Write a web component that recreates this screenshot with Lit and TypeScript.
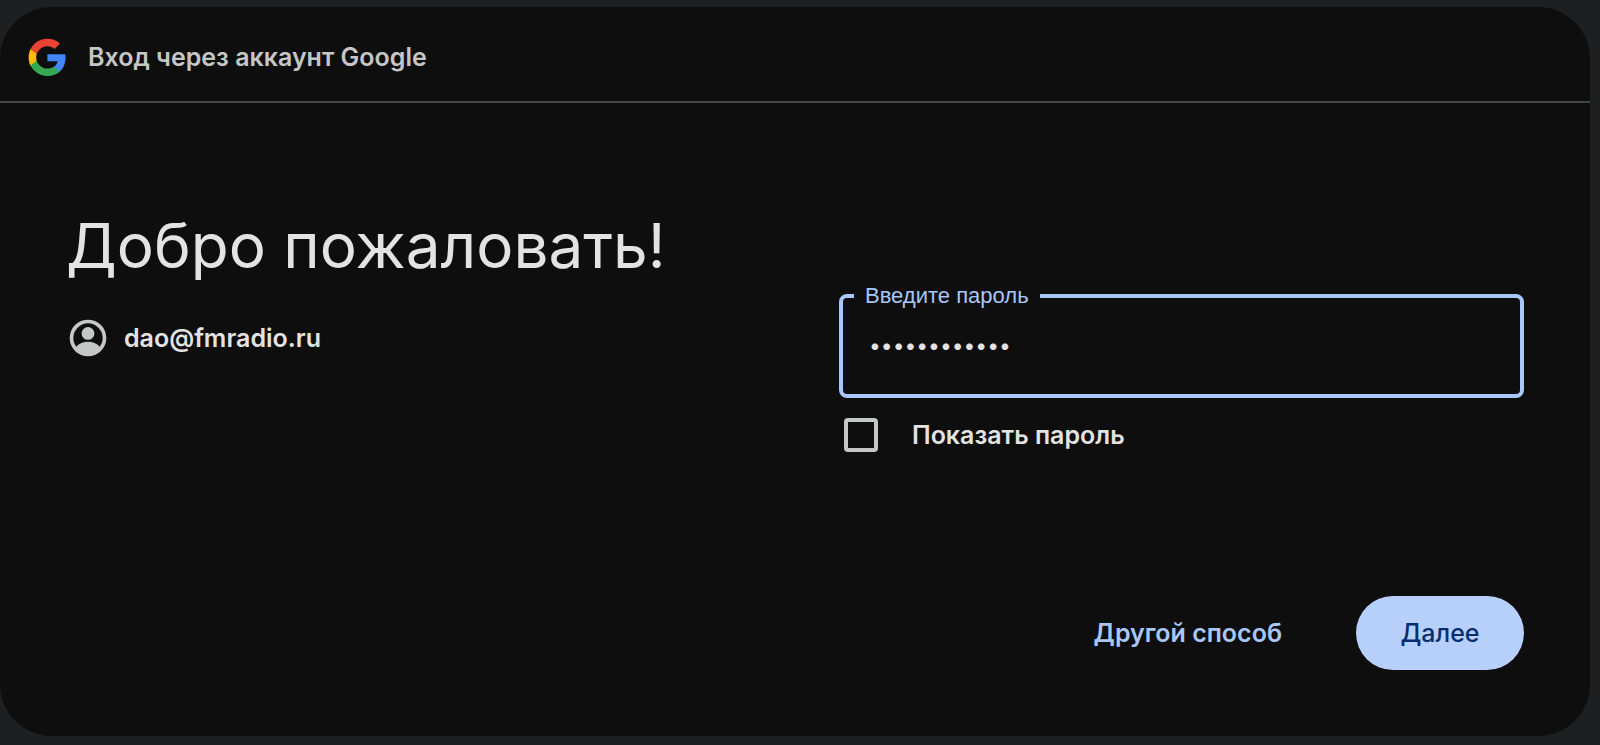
import { LitElement, html, css } from "lit";
import { customElement, state } from "lit/decorators.js";

@customElement("app-root")
class AppRoot extends LitElement {
  @state() private shown = false;

  static styles = css`
    :host {
      display: flex;
      box-sizing: border-box;
      min-height: 100vh;
      padding: 7px 10px 9px 0;
      background: #1e1f20;
      color: #e3e3e3;
      font: 600 25px/32px Inter, Roboto, sans-serif;
    }
    * { box-sizing: border-box; }
    .card {
      flex: 1;
      display: flex;
      flex-direction: column;
      background: #0e0e0e;
      border-radius: 52px;
      overflow: hidden;
    }
    .header {
      display: flex;
      align-items: center;
      gap: 22px;
      padding: 6px 28px 0;
      min-height: 96px;
      border-bottom: 2px solid #444746;
      color: #c4c7c5;
    }
    .logo { width: 38px; height: 38px; flex: none; }
    .body {
      display: grid;
      grid-template-columns: 1fr 1fr;
      gap: 88px;
      padding: 105px 66px 0;
    }
    h1 {
      margin: 0 0 32px;
      font-size: 62px;
      line-height: 76px;
      font-weight: 400;
    }
    .account { display: flex; align-items: center; gap: 14px; }
    .avatar { width: 44px; height: 44px; fill: #c4c7c5; flex: none; }
    .form { padding-top: 75px; }
    .field {
      margin: 0;
      min-width: 0;
      padding: 0 26px;
      height: 115px;
      border: 4px solid #a8c7fa;
      border-radius: 8px;
    }
    .field legend {
      margin-left: -15px;
      padding: 0 11px;
      font: 400 22px/26px "Liberation Sans", Arial, sans-serif;
      color: #a8c7fa;
    }
    .password {
      display: block;
      width: 100%;
      height: 72px;
      padding: 0;
      border: 0;
      outline: 0;
      background: transparent;
      color: #e3e3e3;
      font: 400 21px/28px Inter, Roboto, sans-serif;
    }
    .show {
      display: flex;
      align-items: center;
      gap: 34px;
      margin: 20px 0 0 5px;
    }
    .check {
      appearance: none;
      width: 34px;
      height: 34px;
      margin: 0;
      border: 4px solid #c4c7c5;
      border-radius: 4px;
      flex: none;
    }
    .check:checked { background: #a8c7fa; border-color: #a8c7fa; }
    .actions {
      display: flex;
      justify-content: flex-end;
      align-items: center;
      gap: 74px;
      margin-top: auto;
      padding: 40px 66px 66px;
    }
    button {
      border: 0;
      padding: 0;
      background: none;
      color: #a8c7fa;
      font: inherit;
      cursor: pointer;
    }
    .next {
      min-width: 168px;
      height: 74px;
      padding: 0 40px;
      border-radius: 37px;
      background: #b7cffb;
      color: #062e6f;
      font-weight: 500;
    }
  `;

  render() {
    return html`
      <main class="card">
        <header class="header">
          <svg class="logo" viewBox="-1 -1 49 49" aria-hidden="true">
            <path fill="#4285F4" d="M47.5 24.6c0-1.6-.2-3.2-.5-4.6H24v9.1h13.2c-.6 3-2.3 5.5-4.9 7.2v6h7.9c4.6-4.3 7.3-10.500 7.300-17.700z"/>
            <path fill="#34A853" d="M24 48c6.600 0 12.100-2.200 16.200-5.900l-7.900-6.100c-2.200 1.500-5 2.300-8.300 2.300-6.400 0-11.800-4.300-13.700-10.100H2.200v6.300C6.200 42.600 14.500 48 24 48z"/>
            <path fill="#FBBC05" d="M10.300 28.200c-.5-1.500-.8-2.700-.8-4.200s.3-2.900.8-4.300v-6.300H2.200C.6 16.600-.200 20.200-.200 24s.9 7.400 2.400 10.600l8.100-6.400z"/>
            <path fill="#EA4335" d="M24 9.500c3.600 0 6.800 1.200 9.300 3.600l7-7C36.100 2.200 30.600 0 24 0 14.500 0 6.200 5.400 2.200 13.400l8.100 6.300C12.200 13.900 17.600 9.500 24 9.500z"/>
          </svg>
          <span>Вход через аккаунт Google</span>
        </header>
        <div class="body">
          <section>
            <h1>Добро пожаловать!</h1>
            <div class="account">
              <svg class="avatar" viewBox="0 0 24 24" aria-hidden="true">
                <path fill-rule="evenodd" d="M12 2a10 10 0 1 0 0 20 10 10 0 0 0 0-20zM18.400 16.800C16.900 15 14.400 14.100 12 14.100s-4.900.9-6.400 2.700A8 8 0 1 1 18.400 16.800z"/>
                <circle cx="12" cy="9.500" r="3.500"/>
              </svg>
              <span>dao@fmradio.ru</span>
            </div>
          </section>
          <section class="form">
            <fieldset class="field">
              <legend><label for="password">Введите пароль</label></legend>
              <input class="password" id="password" type=${this.shown ? "text" : "password"} value="radio1234567">
            </fieldset>
            <div class="show">
              <input class="check" id="show" type="checkbox" .checked=${this.shown}
                @change=${(e: Event) => (this.shown = (e.target as HTMLInputElement).checked)}>
              <label for="show">Показать пароль</label>
            </div>
          </section>
        </div>
        <div class="actions">
          <button type="button">Другой способ</button>
          <button class="next" type="submit">Далее</button>
        </div>
      </main>
    `;
  }
}
